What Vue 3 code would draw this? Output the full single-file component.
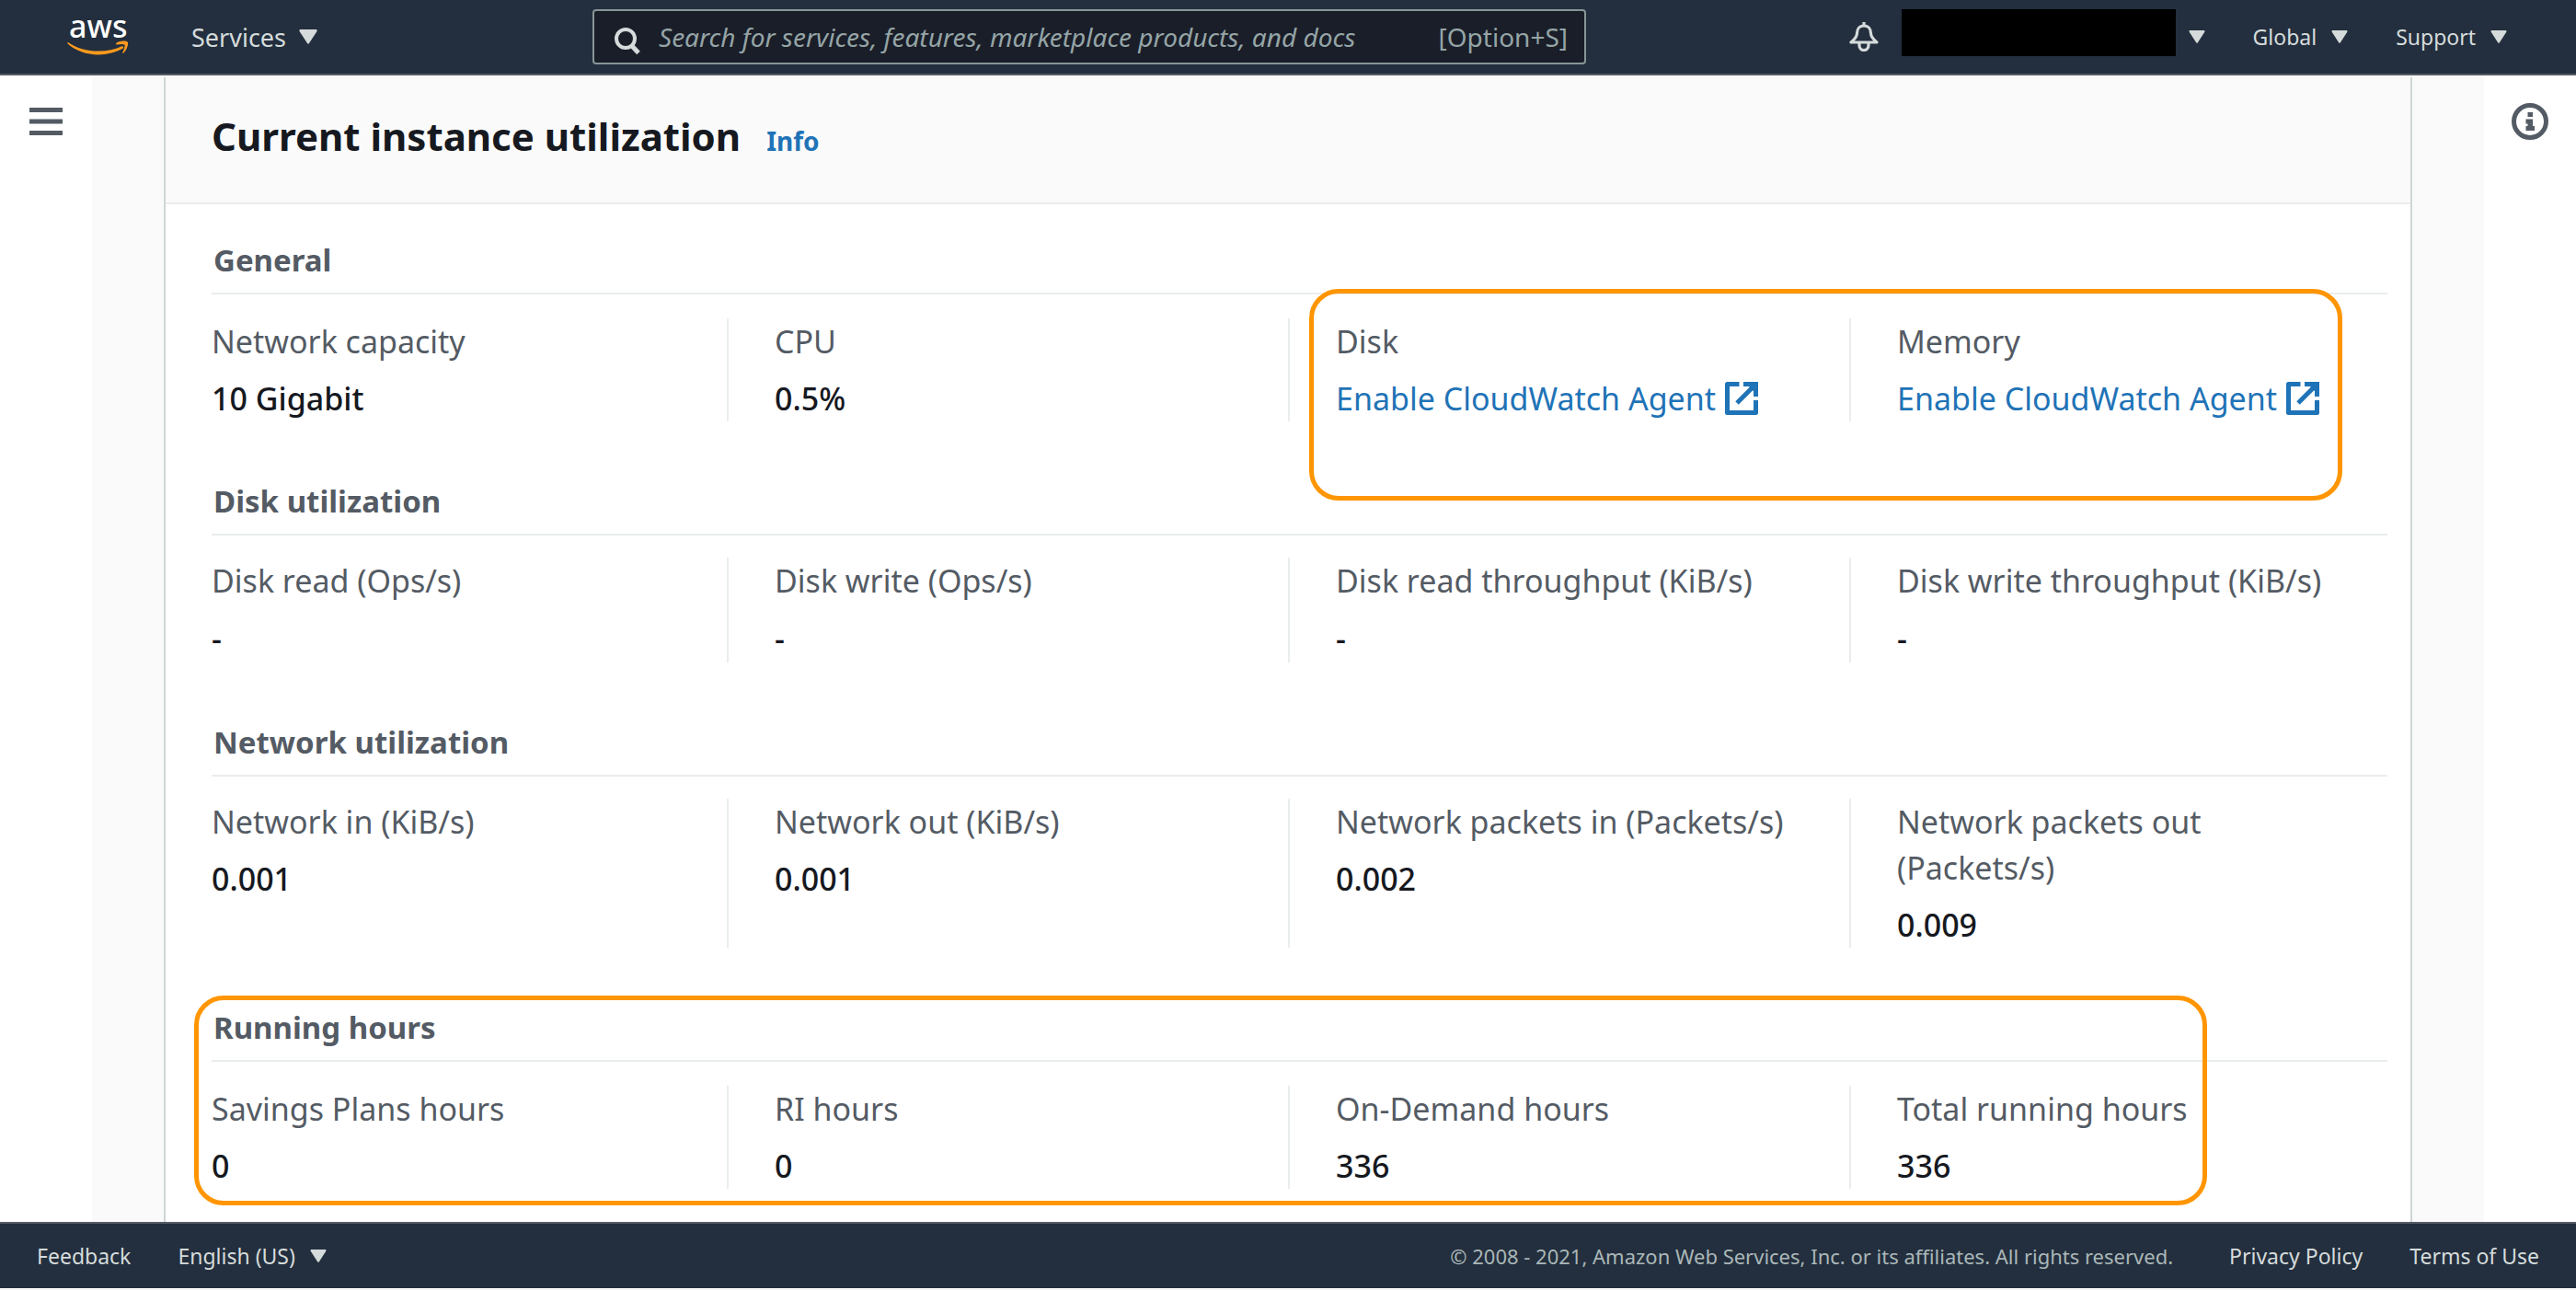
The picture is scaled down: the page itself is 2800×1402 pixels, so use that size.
<script setup>
const sections = [
  {
    title: 'General',
    roomy: true,
    highlight: 'agent',
    items: [
      { label: 'Network capacity', value: '10 Gigabit' },
      { label: 'CPU', value: '0.5%' },
      { label: 'Disk', link: 'Enable CloudWatch Agent' },
      { label: 'Memory', link: 'Enable CloudWatch Agent' },
    ],
  },
  {
    title: 'Disk utilization',
    items: [
      { label: 'Disk read (Ops/s)', value: '-' },
      { label: 'Disk write (Ops/s)', value: '-' },
      { label: 'Disk read throughput (KiB/s)', value: '-' },
      { label: 'Disk write throughput (KiB/s)', value: '-' },
    ],
  },
  {
    title: 'Network utilization',
    items: [
      { label: 'Network in (KiB/s)', value: '0.001' },
      { label: 'Network out (KiB/s)', value: '0.001' },
      { label: 'Network packets in (Packets/s)', value: '0.002' },
      { label: 'Network packets out (Packets/s)', value: '0.009' },
    ],
  },
  {
    title: 'Running hours',
    roomy: true,
    highlight: 'hours',
    items: [
      { label: 'Savings Plans hours', value: '0' },
      { label: 'RI hours', value: '0' },
      { label: 'On-Demand hours', value: '336' },
      { label: 'Total running hours', value: '336' },
    ],
  },
]
</script>

<template>
  <div class="app">
    <header class="topbar">
      <a class="logo" href="#" aria-label="AWS home">
        <svg width="68" height="80" viewBox="0 -18 68 80">
          <text class="logo-text" x="2" y="23">aws</text>
          <path d="M1 28 C18 40 43 40 60 32 L61.500 34 C43 45 16 44 0 29 Z" fill="#ff9a1e" />
          <path d="M53 29 C58 26 64 26 66 28 C66.500 32 64 37 61 40 L60 39.500 C62 36 63 32 62.500 30.500 C60 29.500 57 30 53.500 30.500 Z" fill="#ff9a1e" />
        </svg>
      </a>
      <button class="menu services" type="button">
        Services
        <svg class="caret" width="20" height="16" viewBox="0 0 20 16"><path d="M1 0H19Q20 1 19.500 2L11 15Q10 16.500 9 15L.5 2Q0 1 1 0Z" /></svg>
      </button>
      <label class="search">
        <svg width="30" height="30" viewBox="0 0 30 30" fill="none" stroke="#d5dbdb">
          <circle cx="13" cy="12" r="10" stroke-width="4" />
          <path d="M19.500 19.500 27 27.500" stroke-width="5" />
        </svg>
        <input type="text" aria-label="Search" placeholder="Search for services, features, marketplace products, and docs" />
        <span class="shortcut">[Option+S]</span>
      </label>
      <div class="account">
        <button class="bell" type="button" aria-label="Notifications">
          <svg width="32" height="32" viewBox="0 0 32 32" fill="none" stroke="#d5dbdb" stroke-width="3.200" stroke-linejoin="round">
            <path d="M16 0V4" />
            <path d="M16 4C11 4 8.500 8 8.500 12C8.500 17 5 19 2 22H30C27 19 23.500 17 23.500 12C23.500 8 21 4 16 4Z" />
            <path d="M11 23V25.500A5 5 0 0 0 21 25.500V23" />
          </svg>
        </button>
        <button class="menu user" type="button" aria-label="Account">
          <span class="redacted"></span>
          <svg class="caret" width="18" height="14" viewBox="0 0 20 16"><path d="M1 0H19Q20 1 19.500 2L11 15Q10 16.500 9 15L.5 2Q0 1 1 0Z" /></svg>
        </button>
        <button class="menu" type="button">
          Global
          <svg class="caret" width="18" height="14" viewBox="0 0 20 16"><path d="M1 0H19Q20 1 19.500 2L11 15Q10 16.500 9 15L.5 2Q0 1 1 0Z" /></svg>
        </button>
        <button class="menu" type="button">
          Support
          <svg class="caret" width="18" height="14" viewBox="0 0 20 16"><path d="M1 0H19Q20 1 19.500 2L11 15Q10 16.500 9 15L.5 2Q0 1 1 0Z" /></svg>
        </button>
      </div>
    </header>

    <div class="body">
      <nav class="rail">
        <button type="button" aria-label="Open navigation">
          <svg width="36" height="40" viewBox="0 0 36 40" fill="#545b64"><path d="M0 5H36V10H0ZM0 17.500H36V22.500H0ZM0 30H36V35H0Z" /></svg>
        </button>
      </nav>

      <main class="content">
        <section class="panel">
          <div class="panel-head">
            <h2>Current instance utilization</h2>
            <a href="#">Info</a>
          </div>
          <section v-for="s in sections" :key="s.title" class="group" :class="{ roomy: s.roomy }">
            <h3>{{ s.title }}</h3>
            <dl>
              <div v-for="item in s.items" :key="item.label" class="cell">
                <dt>{{ item.label }}</dt>
                <dd :class="{ empty: item.value === '-' }">
                  <a v-if="item.link" href="#">
                    {{ item.link }}
                    <svg width="36" height="36" viewBox="0 0 36 36" fill="none" stroke="currentColor" stroke-width="5">
                      <path d="M15.500 2.500H2.500V33.500H33.500V20" stroke-linejoin="round" />
                      <path d="M31 5 13 23" />
                      <path d="M20 0H36V16H31V10L26 5H20Z" fill="currentColor" stroke="none" />
                    </svg>
                  </a>
                  <template v-else>{{ item.value }}</template>
                </dd>
              </div>
            </dl>
            <div v-if="s.highlight" class="highlight" :class="s.highlight"></div>
          </section>
        </section>
      </main>

      <aside class="rail right">
        <button type="button" aria-label="Open help">
          <svg width="40" height="40" viewBox="0 0 40 40" fill="#545b64">
            <circle cx="20" cy="20" r="17.500" fill="none" stroke="#545b64" stroke-width="5" />
            <path d="M17.500 10H23V15H17.500ZM15.500 17.500H23V25H25V30H15.500V25H17.500V22.500H15.500Z" />
          </svg>
        </button>
      </aside>
    </div>

    <footer class="footer">
      <a href="#">Feedback</a>
      <button class="menu" type="button">
        English (US)
        <svg class="caret" width="18" height="14" viewBox="0 0 20 16"><path d="M1 0H19Q20 1 19.500 2L11 15Q10 16.500 9 15L.5 2Q0 1 1 0Z" /></svg>
      </button>
      <span class="copyright">© 2008 - 2021, Amazon Web Services, Inc. or its affiliates. All rights reserved.</span>
      <a href="#">Privacy Policy</a>
      <a href="#">Terms of Use</a>
    </footer>
  </div>
</template>

<style>
body {
  background: #fafafa;
}
</style>

<style scoped>
.app {
  display: flex;
  flex-direction: column;
  box-sizing: border-box;
  min-height: 100vh;
  padding-bottom: 2px;
  font-family: "Noto Sans", "Open Sans", sans-serif;
  color: #16191f;
}
a {
  color: #1f73b7;
  text-decoration: none;
}
button {
  padding: 0;
  border: 0;
  background: none;
  font: inherit;
  cursor: pointer;
}
svg {
  flex: none;
}
.menu {
  display: flex;
  align-items: center;
  gap: 16px;
  color: #d5dbdb;
  white-space: nowrap;
}
.caret {
  fill: #d5dbdb;
}

.topbar {
  display: flex;
  align-items: center;
  height: 80px;
  padding: 0 75px 0 73px;
  border-bottom: 2px solid #545b64;
  background: #232f3e;
  font-size: 23px;
}
.logo {
  display: flex;
  width: 135px;
}
.logo-text {
  fill: #fff;
  font-size: 34px;
  font-weight: 500;
}
.services {
  width: 436px;
  gap: 14px;
  font-size: 27px;
}
.search {
  display: flex;
  align-items: center;
  box-sizing: border-box;
  width: 1080px;
  height: 60px;
  padding: 0 18px 0 21px;
  gap: 19px;
  border: 2px solid #879596;
  border-radius: 4px;
  background: #1a1e29;
  color: #95a5a6;
  font-size: 28px;
}
.search svg {
  margin-top: 10px;
}
.search input {
  flex: 1;
  min-width: 0;
  padding: 0;
  border: 0;
  outline: 0;
  background: none;
  color: #fff;
  font: inherit;
}
.search input::placeholder {
  color: #95a5a6;
  font-style: italic;
  opacity: 1;
}
.account {
  display: flex;
  align-items: center;
  margin-left: auto;
  gap: 52px;
}
.bell {
  display: flex;
  margin-right: -27px;
}
.redacted {
  width: 298px;
  height: 51px;
  margin-bottom: 10px;
  background: #000;
}
.user {
  gap: 14px;
}

.body {
  display: flex;
  flex: 1;
}
.rail {
  display: flex;
  align-items: flex-start;
  flex: none;
  box-sizing: border-box;
  width: 100px;
  padding: 30px 32px;
  background: #fff;
}
.rail button {
  display: flex;
}
.rail.right {
  padding: 30px;
}
.content {
  flex: 1;
  display: flex;
  padding: 2px 78px 0;
  background: #fafafa;
}
.panel {
  flex: 1;
  padding-bottom: 36px;
  border: 2px solid #d0d5d5;
  border-width: 0 2px;
  background: #fff;
}
.panel-head {
  display: flex;
  align-items: baseline;
  gap: 28px;
  box-sizing: border-box;
  height: 138px;
  padding: 34px 50px 0;
  border-bottom: 2px solid #eaeded;
  background: #fafafa;
}
.panel-head h2 {
  margin: 0;
  font-size: 42px;
  line-height: 60px;
}
.panel-head a {
  font-size: 28px;
  font-weight: 700;
}
.group {
  position: relative;
  margin-bottom: 26px;
}
.group:last-child {
  margin-bottom: 0;
}
.group h3 {
  margin: 0 25px 0 50px;
  padding: 36px 0 10px 2px;
  border-bottom: 2px solid #eaeded;
  color: #545b64;
  font-size: 33px;
  line-height: 50px;
}
.group dl {
  display: grid;
  grid-template-columns: repeat(4, 1fr);
  margin: 0;
  padding-top: 24px;
  font-size: 34px;
  line-height: 50px;
}
.group.roomy dl {
  padding-top: 26px;
}
.cell {
  padding: 0 60px 0 50px;
  border-left: 2px solid #eaeded;
}
.cell:first-child {
  border-left: 0;
}
dt {
  color: #545b64;
}
dd {
  margin: 12px 0 0;
  font-weight: 500;
}
dd.empty {
  line-height: 52px;
}
dd a {
  display: flex;
  align-items: center;
  gap: 10px;
  font-weight: 400;
  white-space: nowrap;
}
.highlight {
  position: absolute;
  border: 5px solid #ff9500;
  border-radius: 32px;
  pointer-events: none;
}
.highlight.agent {
  top: 92px;
  right: 74px;
  bottom: -86px;
  left: calc(50% + 23px);
}
.highlight.hours {
  top: 26px;
  right: 221px;
  bottom: -18px;
  left: 31px;
}

.footer {
  display: flex;
  align-items: center;
  height: 70px;
  padding: 0 40px;
  gap: 51px;
  border-top: 2px solid #545b64;
  background: #232f3e;
  font-size: 23px;
}
.footer a {
  color: #d5dbdb;
}
.copyright {
  margin-left: auto;
  margin-right: 10px;
  color: #aab7b8;
  font-size: 22px;
}
</style>
